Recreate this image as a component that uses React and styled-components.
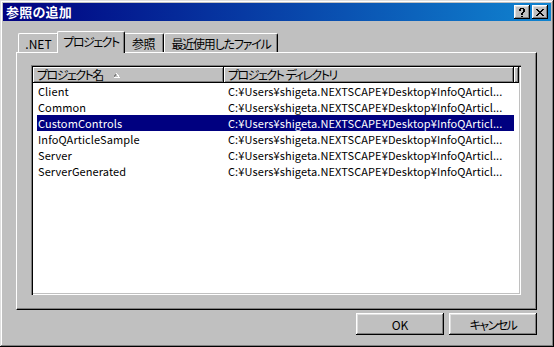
import React from "react";
import styled, { createGlobalStyle } from "styled-components";

const Global = createGlobalStyle`
  html, body { margin: 0; padding: 0; background: #c0c0c0; }
  body { font-family: "Noto Sans CJK JP", "Liberation Sans", sans-serif; font-size: 12px; color: #000; }
  * { box-sizing: border-box; }
`;

const Window = styled.div`
  width: 554px;
  height: 347px;
  padding: 3px;
  background: #c0c0c0;
  display: flex;
  flex-direction: column;
  box-shadow: inset -1px -1px #000, inset 1px 1px #dfdfdf, inset -2px -2px #808080, inset 2px 2px #fff;
`;

const TitleBar = styled.div`
  height: 18px;
  margin-bottom: 1px;
  display: flex;
  align-items: center;
  padding: 0 3px 0 3px;
  background: linear-gradient(to right, #000080, #1084d0);
  color: #fff;
  font-weight: bold;
  font-size: 13px;
  letter-spacing: 0.2px;
`;

const TitleText = styled.span`
  line-height: 18px;
`;

const TitleButtons = styled.div`
  margin-left: auto;
  display: flex;
  gap: 2px;
`;

const TitleButton = styled.div`
  width: 16px;
  height: 14px;
  background: #c0c0c0;
  display: flex;
  align-items: center;
  justify-content: center;
  box-shadow: inset -1px -1px #000, inset 1px 1px #fff, inset -2px -2px #808080, inset 2px 2px #dfdfdf;
`;

const Body = styled.div`
  flex: 1;
  display: flex;
  flex-direction: column;
  padding: 9px 14px 9px 13px;
`;

const TabRow = styled.div`
  height: 21px;
  display: flex;
  align-items: flex-end;
  padding-left: 2px;
`;

const Tab = styled.div`
  position: relative;
  width: ${(p) => p.$w + (p.$active ? 4 : 0)}px;
  height: ${(p) => (p.$active ? 22 : 19)}px;
  margin: ${(p) => (p.$active ? "0 -2px -1px -2px" : "0")};
  z-index: ${(p) => (p.$active ? 2 : 1)};
  background: #c0c0c0;
  border-top: 1px solid #fff;
  border-left: 1px solid #fff;
  border-right: 1px solid #000;
  border-top-left-radius: 2px;
  border-top-right-radius: 2px;
  box-shadow: inset -1px 0 #808080;
  display: flex;
  align-items: center;
  justify-content: center;
  padding-bottom: ${(p) => (p.$active ? 2 : 0)}px;
  white-space: nowrap;
  font-size: 12px;
  letter-spacing: ${(p) => p.$ls}px;
  font-feature-settings: "palt";
`;

const Panel = styled.div`
  flex: 1;
  display: flex;
  flex-direction: column;
  background: #c0c0c0;
  border-top: 1px solid #fff;
  border-left: 1px solid #fff;
  border-right: 1px solid #000;
  border-bottom: 1px solid #000;
  box-shadow: inset -1px -1px #808080;
  padding: 12px 15px 14px 14px;
`;

const ListView = styled.div`
  flex: 1;
  background: #fff;
  padding: 2px;
  box-shadow: inset 1px 1px #808080, inset 2px 2px #000, inset -1px -1px #fff, inset -2px -2px #c0c0c0;
  overflow: hidden;
`;

const Header = styled.div`
  display: flex;
  height: 16px;
`;

const HeaderCell = styled.div`
  flex: ${(p) => (p.$w ? `0 0 ${p.$w}px` : "1")};
  height: 16px;
  background: #c0c0c0;
  box-shadow: inset -1px -1px #000, inset 1px 1px #fff, inset -2px -2px #808080;
  padding-left: 4px;
  line-height: 16px;
  white-space: pre;
  overflow: hidden;
  display: flex;
  align-items: center;
  letter-spacing: -1.5px;
  font-feature-settings: "palt";
`;

const SortArrow = styled.svg`
  margin-left: 10px;
  flex: none;
`;

const Row = styled.div`
  display: grid;
  grid-template-columns: 187px 290px;
  width: 477px;
  margin-left: 4px;
  height: 16px;
  line-height: 16px;
  font-size: 11px;
  letter-spacing: 0.1px;
  background: ${(p) => (p.$selected ? "#000080" : "transparent")};
  color: ${(p) => (p.$selected ? "#fff" : "#000")};
`;

const Cell = styled.div`
  padding-left: ${(p) => p.$pad}px;
  white-space: nowrap;
  overflow: hidden;
`;

const ButtonRow = styled.div`
  margin-top: 3px;
  display: flex;
  justify-content: flex-end;
  gap: 5px;
`;

const Button = styled.div`
  width: 88px;
  height: 22px;
  background: #c0c0c0;
  display: flex;
  align-items: center;
  justify-content: center;
  box-shadow: inset -1px -1px #000, inset 1px 1px #fff, inset -2px -2px #808080, inset 2px 2px #dfdfdf;
  font-size: 12px;
  letter-spacing: ${(p) => p.$ls || 0}px;
  font-feature-settings: "palt";
`;

const PixelGlyph = ({ rows }) => (
  <svg width={rows[0].length} height={rows.length} shapeRendering="crispEdges">
    {rows.flatMap((r, y) =>
      r.split("").map((c, x) =>
        c === "X" ? <rect key={`${x}-${y}`} x={x} y={y} width="1" height="1" fill="#000" /> : null
      )
    )}
  </svg>
);

const HELP = [
  ".XXXX.",
  "XX..XX",
  "XX..XX",
  "....XX",
  "...XX.",
  "..XX..",
  "..XX..",
  "......",
  "..XX..",
];

const CLOSE = [
  "XX....XX",
  ".XX..XX.",
  "..XXXX..",
  "...XX...",
  "..XXXX..",
  ".XX..XX.",
  "XX....XX",
];

const tabs = [
  { label: ".NET", w: 41, ls: 0 },
  { label: "プロジェクト", w: 64, ls: -1.5, active: true },
  { label: "参照", w: 41, ls: -0.5 },
  { label: "最近使用したファイル", w: 114, ls: -1.2 },
];

const path = "C:¥Users¥shigeta.NEXTSCAPE¥Desktop¥InfoQArticl...";
const projects = ["Client", "Common", "CustomControls", "InfoQArticleSample", "Server", "ServerGenerated"];

export default function App() {
  return (
    <>
      <Global />
      <Window>
        <TitleBar>
          <TitleText>参照の追加</TitleText>
          <TitleButtons>
            <TitleButton>
              <PixelGlyph rows={HELP} />
            </TitleButton>
            <TitleButton>
              <PixelGlyph rows={CLOSE} />
            </TitleButton>
          </TitleButtons>
        </TitleBar>
        <Body>
          <TabRow>
            {tabs.map((t) => (
              <Tab key={t.label} $w={t.w} $ls={t.ls} $active={t.active}>
                {t.label}
              </Tab>
            ))}
          </TabRow>
          <Panel>
            <ListView>
              <Header>
                <HeaderCell $w={191}>
                  プロジェクト名
                  <SortArrow width="7" height="5" viewBox="0 0 7 5" shapeRendering="crispEdges">
                    <path d="M3.5 0.5 L0.5 4.5" stroke="#808080" fill="none" />
                    <path d="M3.5 0.5 L6.5 4.5 L0.5 4.5" stroke="#fff" fill="none" />
                  </SortArrow>
                </HeaderCell>
                <HeaderCell $w={290}>プロジェクト  ディレクトリ</HeaderCell>
                <HeaderCell />
              </Header>
              {projects.map((p) => (
                <Row key={p} $selected={p === "CustomControls"}>
                  <Cell $pad={1}>{p}</Cell>
                  <Cell $pad={4}>{path}</Cell>
                </Row>
              ))}
            </ListView>
          </Panel>
          <ButtonRow>
            <Button>OK</Button>
            <Button $ls={-1.5}>キャンセル</Button>
          </ButtonRow>
        </Body>
      </Window>
    </>
  );
}
